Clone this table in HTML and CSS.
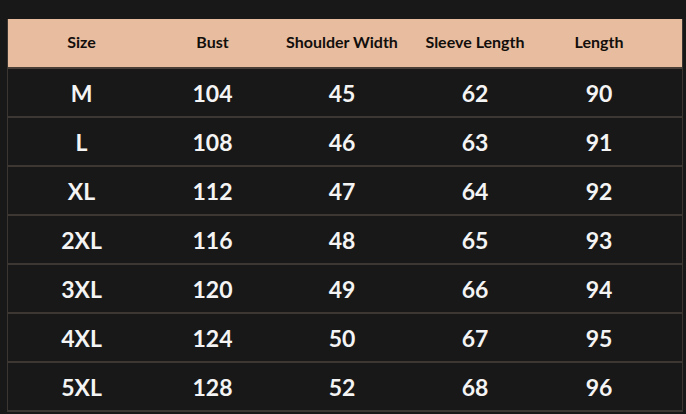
FILE: index.html
```html
<!DOCTYPE html>
<html>
<head>
<meta charset="utf-8">
<link rel="stylesheet" href="styles.css">
</head>
<body>
<div class="table">
  <div class="row head">
    <div class="cell">Size</div><div class="cell">Bust</div><div class="cell">Shoulder Width</div><div class="cell">Sleeve Length</div><div class="cell">Length</div><div class="cell"></div>
  </div>
  <div class="row"><div class="cell">M</div><div class="cell">104</div><div class="cell">45</div><div class="cell">62</div><div class="cell">90</div><div class="cell"></div></div>
  <div class="row"><div class="cell">L</div><div class="cell">108</div><div class="cell">46</div><div class="cell">63</div><div class="cell">91</div><div class="cell"></div></div>
  <div class="row"><div class="cell">XL</div><div class="cell">112</div><div class="cell">47</div><div class="cell">64</div><div class="cell">92</div><div class="cell"></div></div>
  <div class="row"><div class="cell">2XL</div><div class="cell">116</div><div class="cell">48</div><div class="cell">65</div><div class="cell">93</div><div class="cell"></div></div>
  <div class="row"><div class="cell">3XL</div><div class="cell">120</div><div class="cell">49</div><div class="cell">66</div><div class="cell">94</div><div class="cell"></div></div>
  <div class="row"><div class="cell">4XL</div><div class="cell">124</div><div class="cell">50</div><div class="cell">67</div><div class="cell">95</div><div class="cell"></div></div>
  <div class="row"><div class="cell">5XL</div><div class="cell">128</div><div class="cell">52</div><div class="cell">68</div><div class="cell">96</div><div class="cell"></div></div>
</div>
</body>
</html>
```
FILE: styles.css
```css
html, body {
  margin: 0;
  padding: 0;
  background: #181818;
  width: 686px;
  height: 414px;
  overflow: hidden;
}
body {
  padding: 19px 0 0 7px;
  box-sizing: border-box;
  font-family: Lato, "Open Sans", sans-serif;
  font-weight: 700;
}
.table {
  width: 676px;
  border-left: 1px solid #3c3633;
  border-right: 1px solid #3c3633;
  box-sizing: border-box;
}
.row {
  display: grid;
  grid-template-columns: 147px 115px 144px 122px 126px 1fr;
  height: 49px;
  border-bottom: 2px solid #3d3734;
  box-sizing: border-box;
  color: #f4f4f4;
  font-size: 23px;
  background: #181818;
}
.row.head {
  height: 50px;
  background: #e8bd9f;
  color: #120e0c;
  font-size: 16px;
  border-bottom: 2px solid #4a3f38;
}
.row.head .cell {
  padding-bottom: 3px;
}
.cell {
  display: flex;
  align-items: center;
  justify-content: center;
  white-space: nowrap;
}
```
